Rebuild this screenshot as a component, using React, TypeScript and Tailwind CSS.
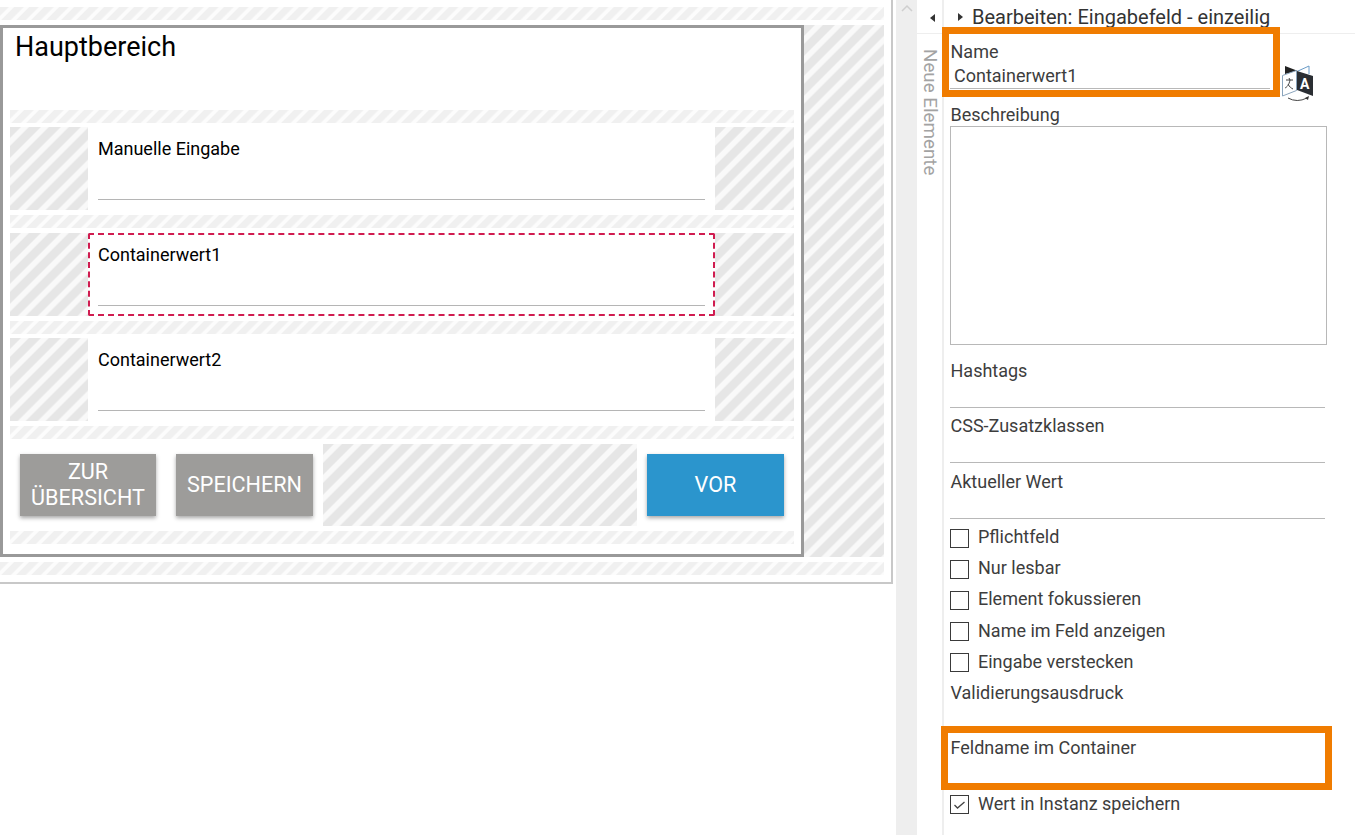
const hatchLight = "bg-[repeating-linear-gradient(135deg,#f0f0f0_0,#f0f0f0_5.5px,#fcfcfc_7px,#fcfcfc_9.5px,#f0f0f0_10.6px)]";
const hatchDark = "bg-[repeating-linear-gradient(135deg,#e6e6e6_0,#e6e6e6_7px,#f9f9f9_8.5px,#f9f9f9_12.6px,#e6e6e6_14.1px)]";

function Band({ className = "" }: { className?: string }) {
  return <div className={`h-[13px] ${hatchLight} ${className}`} />;
}

function Row({ label, selected }: { label: string; selected?: boolean }) {
  return (
    <div className="flex h-[83px]">
      <div className={`w-[78px] ${hatchDark}`} />
      <div className="relative w-[627px] pl-[10px] pr-[10px] pt-[11px]">
        <div className="text-[18px] leading-[21px] text-black">{label}</div>
        <div className="mt-[40px] h-px bg-[#b5b5b5]" />
        {selected && <div className="absolute inset-0 rounded-[2px] border-2 border-dashed border-[#d01c50]" />}
      </div>
      <div className={`w-[79px] ${hatchDark}`} />
    </div>
  );
}

function Btn({ children, className = "" }: { children: React.ReactNode; className?: string }) {
  return (
    <div className={`flex h-[62px] items-center justify-center text-center text-[21.6px] leading-[26px] text-white shadow-[0_2px_4px_rgba(0,0,0,0.35)] ${className}`}>
      {children}
    </div>
  );
}

function Line({ label, h }: { label: string; h: string }) {
  return (
    <div className={`flex flex-col ${h}`}>
      <div className="pl-[0.5px] text-[18px] leading-[22px] text-[#3d3d3d]">{label}</div>
      <div className="mt-auto mr-[2px] h-px bg-[#b8b8b8]" />
    </div>
  );
}

function Check({ label, checked, className = "" }: { label: string; checked?: boolean; className?: string }) {
  return (
    <div className={`flex items-center gap-[9px] text-[18px] leading-[22px] text-[#3d3d3d] ${className}`}>
      <div className="mt-[2px] flex h-[19px] w-[19px] items-center justify-center border border-[#3a3a3a]">
        {checked && (
          <svg width="15" height="15" viewBox="0 0 15 15" fill="none" stroke="#444" strokeWidth="1.3">
            <path d="M2.5 8l3 3 7-6" />
          </svg>
        )}
      </div>
      <span>{label}</span>
    </div>
  );
}

function TranslateIcon() {
  return (
    <svg width="35" height="39" viewBox="0 0 35 39" className="absolute left-[336px] top-[30px]">
      <path d="M18 7l11-5v8" fill="#fff" stroke="#6a9cc8" strokeWidth="1" />
      <path d="M5 2l13 5-13 3z" fill="#222" />
      <path d="M2.5 11.5l14-5v20l-14 5.5z" fill="#fff" stroke="#8aa4bc" strokeWidth="1" />
      <path d="M17 7l16 5v20l-16-6z" fill="#2a2e33" />
      <text x="20" y="25" fontFamily="Roboto, sans-serif" fontWeight="700" fontSize="14" fill="#fff">A</text>
      <path d="M6 16h7M9 14l1 2c-1 5-3 7-5 8M8 20c1.5 3 3 4 5 5" fill="none" stroke="#444" strokeWidth="1" />
      <path d="M8 34q9 5 19 0" fill="none" stroke="#444" strokeWidth="1" />
      <path d="M29 32l-1 4-3-2z" fill="#333" />
    </svg>
  );
}

export default function App() {
  return (
    <div className="flex h-[835px] w-[1355px] overflow-hidden bg-white font-['Roboto',sans-serif]">
      <div className="w-[893px] shrink-0">
        <div className="h-[584px] border-r-2 border-b-2 border-[#c8c8c8] pt-[7px]">
          <Band className="w-[884px]" />
          <div className="mt-[5px] flex h-[532px] w-[884px]">
            <div className="w-[804px] border-[3px] border-[#999999] pl-[7px]">
              <div className="-ml-[7px] h-[82px] pl-[12px] pt-[1px] text-[27px] leading-[36px] text-black">Hauptbereich</div>
              <div className="w-[784px]">
                <Band />
                <div className="h-[4px]" />
                <Row label="Manuelle Eingabe" />
                <div className="h-[5px]" />
                <Band />
                <div className="h-[5px]" />
                <Row label="Containerwert1" selected />
                <div className="h-[5px]" />
                <Band />
                <div className="h-[4px]" />
                <Row label="Containerwert2" />
                <div className="h-[5px]" />
                <Band />
                <div className="h-[5px]" />
                <div className="flex h-[82px] items-center">
                  <Btn className="ml-[10px] w-[136px] bg-[#9d9c9a]">ZUR<br />ÜBERSICHT</Btn>
                  <Btn className="ml-[20px] w-[137px] bg-[#9d9c9a]">SPEICHERN</Btn>
                  <div className={`ml-[10px] h-[82px] w-[314px] ${hatchDark}`} />
                  <Btn className="ml-[10px] w-[137px] bg-[#2b95cd]">VOR</Btn>
                </div>
                <div className="h-[5px]" />
                <Band />
              </div>
            </div>
            <div className={`w-[80px] ${hatchDark}`} />
          </div>
          <Band className="mt-[5px] w-[884px]" />
        </div>
      </div>

      <div className="ml-[3px] flex w-[21px] shrink-0 justify-center bg-[#eeeeee] pt-[4px]">
        <svg width="12" height="8" viewBox="0 0 12 8" fill="none" stroke="#cfcfcf" strokeWidth="1.5">
          <path d="M1 7l5-5 5 5" />
        </svg>
      </div>

      <div className="w-[25px] shrink-0">
        <div className="flex h-[34px] items-center justify-center border-b border-[#eeeeee] pl-[6px] pt-[2px]">
          <div className="h-0 w-0 border-y-[4px] border-r-[5px] border-y-transparent border-r-[#333333]" />
        </div>
        <div className="mt-[15px] pl-[3px] text-[18.8px] leading-[20px] text-[#a3a3a3] [writing-mode:vertical-rl]">Neue Elemente</div>
      </div>

      <div className="min-w-0 flex-1 border-l-2 border-[#eeeeee]">
        <div className="flex h-[34px] items-center gap-[9px] border-b border-[#eeeeee] pl-[14px] pt-[1px] text-[20px] text-[#333333]">
          <div className="h-0 w-0 border-y-[4px] border-l-[5px] border-y-transparent border-l-[#333333]" />
          <span>Bearbeiten: Eingabefeld - einzeilig</span>
        </div>

        <div className="relative pl-[6px]">
          <div className="absolute left-[-2px] top-[-7px] h-[70px] w-[338px] border-[7px] border-[#f07c00]" />
          <TranslateIcon />
          <div className="h-[59px] w-[320px] pt-[7px]">
            <div className="pl-[0.5px] text-[18px] leading-[22px] text-[#3d3d3d]">Name</div>
            <div className="mt-[2px] pl-[4px] text-[18px] leading-[22px] text-[#3d3d3d]">Containerwert1</div>
            <div className="mt-[1px] h-px bg-[#b8b8b8]" />
          </div>

          <div className="mt-[11px] pl-[0.5px] text-[18px] leading-[22px] text-[#3d3d3d]">Beschreibung</div>
          <div className="h-[219px] w-[377px] border border-[#b8b8b8]" />

          <div className="w-[377px]">
            <Line label="Hashtags" h="mt-[15px] h-[48px]" />
            <Line label="CSS-Zusatzklassen" h="mt-[7px] h-[48px]" />
            <Line label="Aktueller Wert" h="mt-[8px] h-[48px]" />
          </div>

          <div className="mt-[7px] flex flex-col gap-[9.2px]">
            <Check label="Pflichtfeld" />
            <Check label="Nur lesbar" />
            <Check label="Element fokussieren" />
            <Check label="Name im Feld anzeigen" />
            <Check label="Eingabe verstecken" />
          </div>

          <div className="mt-[9px] pl-[0.5px] text-[18px] leading-[22px] text-[#3d3d3d]">Validierungsausdruck</div>

          <div className="relative mt-[33px] pl-[0.5px]">
            <div className="absolute left-[-9px] top-[-11px] h-[64px] w-[391px] border-[7px] border-[#f07c00]" />
            <div className="text-[18px] leading-[22px] text-[#3d3d3d]">Feldname im Container</div>
          </div>

          <Check label="Wert in Instanz speichern" checked className="mt-[34px]" />
        </div>
      </div>
    </div>
  );
}
